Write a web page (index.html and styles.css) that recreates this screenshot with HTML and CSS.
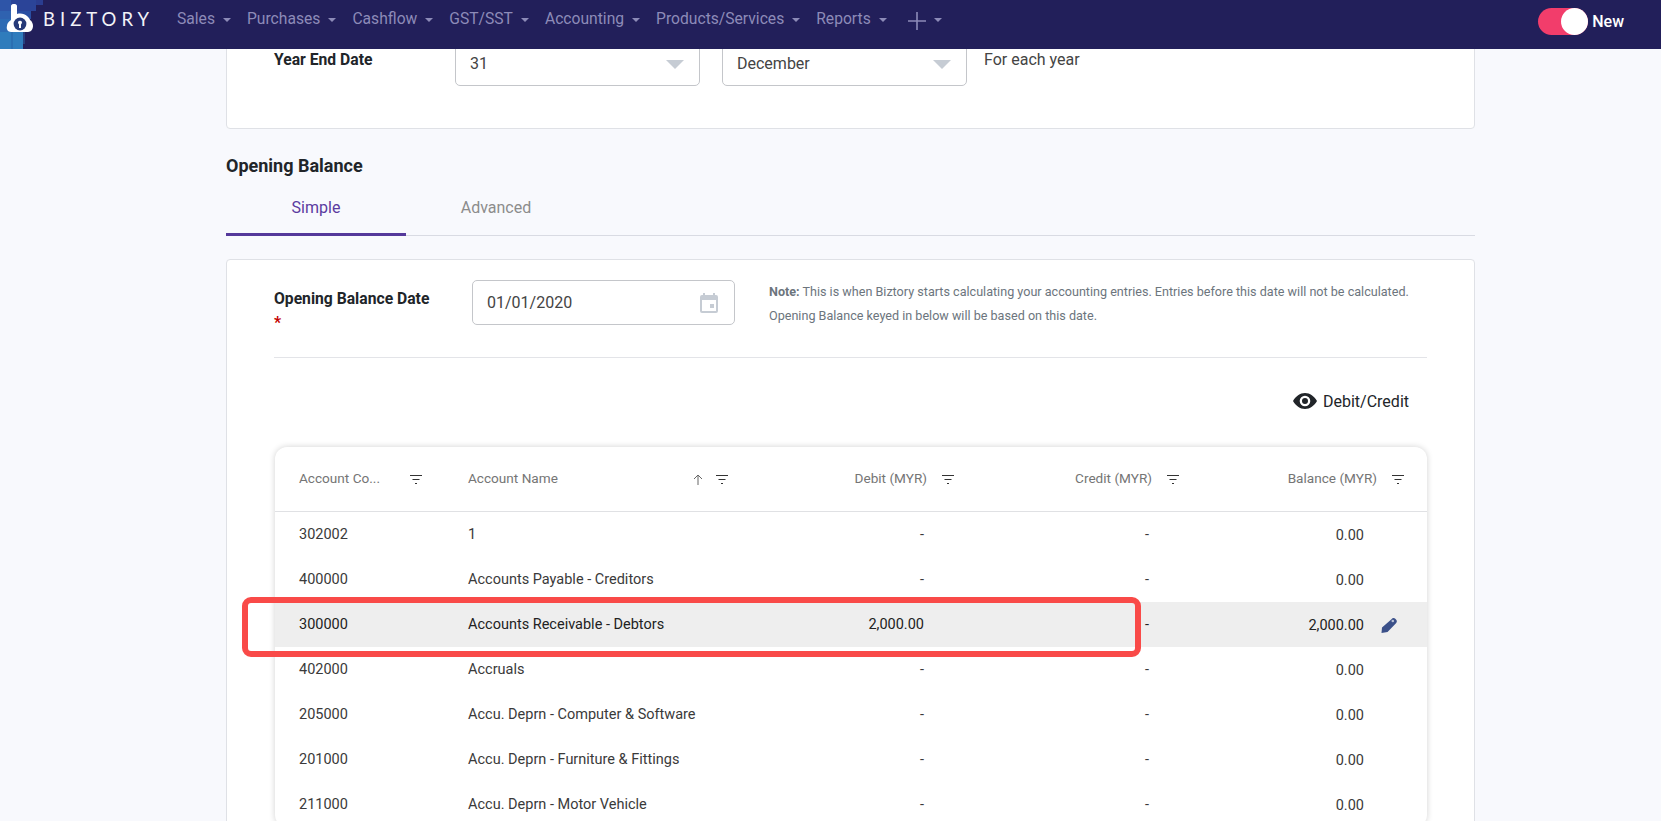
FILE: index.html
```html
<!DOCTYPE html>
<html lang="en">
<head>
<meta charset="utf-8">
<title>Biztory - Opening Balance</title>
<link rel="stylesheet" href="styles.css">
</head>
<body>
<header class="nav">
  <div class="brand">
    <svg class="logo" width="43" height="49" viewBox="0 0 43 49">
      <rect x="0" y="0" width="43" height="5" fill="#2a3d90"/>
      <rect x="0" y="0" width="36" height="11" fill="#2b4498"/>
      <rect x="0" y="11" width="31" height="8" fill="#2a4fa2"/>
      <rect x="0" y="0" width="11" height="11" fill="#2e55a8"/>
      <rect x="0" y="11" width="11" height="10" fill="#2f62b0"/>
      <rect x="0" y="19" width="26" height="13" fill="#2d6bb4"/>
      <rect x="0" y="32" width="23" height="17" fill="#2f7cbc"/>
      <rect x="11" y="32" width="2" height="17" fill="#2b6fb2"/>
      <rect x="23" y="32" width="2" height="12" fill="#25407f"/>
      <path fill="#fff" d="M11 6c0-1 1-2 2-2h2c1 0 2 1 2 2v8c4-1 8 0 10 2 2 2 3 3 3 4 2 1 3 4 3 6 0 3-2 6-5 6H11c-3 0-5-3-4-6 0-2 1-4 4-6z"/>
      <circle cx="20" cy="24" r="6.4" fill="#263a78"/>
      <path fill="#fff" d="M18 22a2.2 2.2 0 0 1 4 0c0 1-.5 2-1 2.400V28h-2v-3.600c-.5-.4-1-1.400-1-2.400z"/>
    </svg>
    <span class="wordmark">BIZTORY</span>
  </div>
  <nav class="menu">
    <a class="menu-item">Sales<i class="caret"></i></a>
    <a class="menu-item">Purchases<i class="caret"></i></a>
    <a class="menu-item">Cashflow<i class="caret"></i></a>
    <a class="menu-item">GST/SST<i class="caret"></i></a>
    <a class="menu-item">Accounting<i class="caret"></i></a>
    <a class="menu-item">Products/Services<i class="caret"></i></a>
    <a class="menu-item">Reports<i class="caret"></i></a>
    <a class="menu-item plus-item">
      <svg class="plus" width="18" height="18" viewBox="0 0 18 18"><path d="M9 0v18M0 9h18" stroke="#8d8bb8" stroke-width="1.600"/></svg><i class="caret"></i>
    </a>
  </nav>
  <div class="switch-group">
    <span class="switch"><span class="knob"></span></span>
    <span class="switch-label">New</span>
  </div>
</header>

<main class="page">
  <section class="card year-card">
    <div class="year-row">
      <div class="field-label year-label">Year End Date</div>
      <div class="select">31<i class="select-arrow"></i></div>
      <div class="select">December<i class="select-arrow"></i></div>
      <div class="year-hint">For each year</div>
    </div>
  </section>

  <h2 class="section-title">Opening Balance</h2>
  <div class="tabs">
    <div class="tab tab-active">Simple</div>
    <div class="tab">Advanced</div>
  </div>

  <section class="card balance-card">
    <div class="date-row">
      <div class="field-label date-label">Opening Balance Date<br><span class="req">*</span></div>
      <div class="date-input">01/01/2020
        <svg width="18" height="20" viewBox="0 0 18 20"><path fill="#c6ccd4" fill-rule="evenodd" d="M3 0h2v2h8V0h2v2h1a2 2 0 0 1 2 2v14a2 2 0 0 1-2 2H2a2 2 0 0 1-2-2V4a2 2 0 0 1 2-2h1zM2 7v11h14V7zm8 4h4v4h-4z"/></svg>
      </div>
      <p class="note"><b>Note:</b> This is when Biztory starts calculating your accounting entries. Entries before this date will not be calculated.<br>Opening Balance keyed in below will be based on this date.</p>
    </div>
    <hr class="divider">
    <div class="toggle-row">
      <svg width="24" height="16" viewBox="0 0 24 16"><path fill="#212529" fill-rule="evenodd" d="M12 0C7 0 2.700 3.300 0 8c2.700 4.700 7 8 12 8s9.300-3.300 12-8c-2.700-4.700-7-8-12-8zm0 13.300A5.300 5.300 0 1 1 12 2.700a5.300 5.300 0 0 1 0 10.600zM12 5a3 3 0 1 0 0 6 3 3 0 0 0 0-6z"/></svg>
      <span>Debit/Credit</span>
    </div>

    <div class="table">
      <div class="thead">
        <div class="th th-code"><span class="th-text">Account Co...</span><svg class="filter" viewBox="0 0 12 9"><path d="M0 .5h12M2.500 4.500h7M5 8.500h2" stroke="#333" stroke-width="1"/></svg></div>
        <div class="th th-name"><span class="th-text">Account Name</span>
          <svg class="sort" viewBox="0 0 10 11"><path d="M5 11V1M1 5l4-4 4 4" fill="none" stroke="#666" stroke-width="1"/></svg>
          <svg class="filter" viewBox="0 0 12 9"><path d="M0 .5h12M2.500 4.500h7M5 8.500h2" stroke="#333" stroke-width="1"/></svg></div>
        <div class="th th-num">Debit (MYR)<svg class="filter" viewBox="0 0 12 9"><path d="M0 .5h12M2.500 4.500h7M5 8.500h2" stroke="#333" stroke-width="1"/></svg></div>
        <div class="th th-num">Credit (MYR)<svg class="filter" viewBox="0 0 12 9"><path d="M0 .5h12M2.500 4.500h7M5 8.500h2" stroke="#333" stroke-width="1"/></svg></div>
        <div class="th th-num th-bal">Balance (MYR)<svg class="filter" viewBox="0 0 12 9"><path d="M0 .5h12M2.500 4.500h7M5 8.500h2" stroke="#333" stroke-width="1"/></svg></div>
      </div>
      <div class="tr"><div class="td">302002</div><div class="td">1</div><div class="td td-num">-</div><div class="td td-num">-</div><div class="td td-bal">0.00</div></div>
      <div class="tr"><div class="td">400000</div><div class="td">Accounts Payable - Creditors</div><div class="td td-num">-</div><div class="td td-num">-</div><div class="td td-bal">0.00</div></div>
      <div class="tr tr-active"><div class="td">300000</div><div class="td">Accounts Receivable - Debtors</div><div class="td td-num">2,000.00</div><div class="td td-num">-</div><div class="td td-bal">2,000.00
        <svg class="pencil" viewBox="0 0 16 15"><path fill="#3b5089" d="M10.500 1.200c1-1.200 2.500-1.500 3.800-.4l.9.9c1 1.100.8 2.600-.2 3.600L6.500 14 .5 15l.5-5.500z"/><circle cx="11.800" cy="3" r="1.300" fill="#b9c0d6"/></svg></div></div>
      <div class="tr"><div class="td">402000</div><div class="td">Accruals</div><div class="td td-num">-</div><div class="td td-num">-</div><div class="td td-bal">0.00</div></div>
      <div class="tr"><div class="td">205000</div><div class="td">Accu. Deprn - Computer &amp; Software</div><div class="td td-num">-</div><div class="td td-num">-</div><div class="td td-bal">0.00</div></div>
      <div class="tr"><div class="td">201000</div><div class="td">Accu. Deprn - Furniture &amp; Fittings</div><div class="td td-num">-</div><div class="td td-num">-</div><div class="td td-bal">0.00</div></div>
      <div class="tr"><div class="td">211000</div><div class="td">Accu. Deprn - Motor Vehicle</div><div class="td td-num">-</div><div class="td td-num">-</div><div class="td td-bal">0.00</div></div>
    </div>
  </section>
</main>
<div class="callout"></div>
</body>
</html>
```

FILE: styles.css
```css
* { box-sizing: border-box; }
html, body { margin: 0; height: 100%; }
body {
  height: 821px;
  overflow: hidden;
  background: #f8f9fd;
  color: #212529;
  font-family: Roboto, "Liberation Sans", sans-serif;
  font-size: 14px;
  position: relative;
}

/* Top bar */
.nav {
  position: relative;
  z-index: 2;
  display: flex;
  align-items: flex-start;
  height: 49px;
  background: #221f5a;
}
.brand { display: flex; align-items: flex-start; width: 177px; height: 49px; }
.logo { display: block; flex: none; }
.wordmark {
  margin-top: 8px;
  color: #f2f2f7;
  font-family: Lato, sans-serif;
  font-size: 18.500px;
  line-height: 22px;
  letter-spacing: 5px;
}
.menu { display: flex; align-items: center; height: 38px; gap: 16px; }
.menu-item {
  display: flex;
  align-items: center;
  color: #8d8bb8;
  font-size: 15.650px;
  line-height: 20px;
}
.plus-item { margin-left: 5px; }
.plus { margin-top: 4px; }
.caret {
  display: block;
  margin-left: 8px;
  margin-top: 2px;
  border-left: 4px solid transparent;
  border-right: 4px solid transparent;
  border-top: 4px solid #8d8bb8;
}
.switch-group {
  display: flex;
  align-items: center;
  gap: 4px;
  height: 43px;
  margin-left: auto;
  padding-right: 37px;
}
.switch {
  display: flex;
  justify-content: flex-end;
  width: 50px;
  height: 27px;
  border-radius: 14px;
  background: #f23d6b;
}
.knob { width: 27px; height: 27px; border-radius: 50%; background: #fff; }
.switch-label { color: #fff; font-size: 16px; font-weight: 500; }

/* Page */
.page { padding: 0 186px 0 226px; }
.card {
  background: #fff;
  border: 1px solid #dfe1e6;
  border-radius: 4px;
}
.year-card { height: 110px; margin-top: -30px; padding: 21px 47px 0; }
.year-row { display: flex; align-items: flex-start; }
.field-label { font-weight: 700; font-size: 15.700px; line-height: 24px; color: #212529; }
.year-label { width: 181px; padding-top: 7px; }
.select {
  position: relative;
  display: flex;
  align-items: center;
  width: 245px;
  height: 45px;
  margin-right: 22px;
  padding-left: 14px;
  background: #fff;
  border: 1px solid #c4c6ca;
  border-radius: 5px;
  color: #444;
  font-size: 16px;
}
.select-arrow {
  position: absolute;
  right: 15px;
  top: 18px;
  border-left: 9px solid transparent;
  border-right: 9px solid transparent;
  border-top: 9px solid #c6ccd4;
}
.year-hint { margin-left: -5px; padding-top: 7px; font-size: 16px; line-height: 24px; color: #444; }

.section-title {
  margin: 27px 0 0;
  font-size: 18px;
  font-weight: 700;
  line-height: 20px;
  color: #212529;
}
.tabs {
  display: flex;
  height: 60px;
  border-bottom: 1px solid #d9dbe3;
}
.tab {
  display: flex;
  align-items: center;
  justify-content: center;
  width: 180px;
  height: 62px;
  padding-top: 8px;
  border-bottom: 3px solid transparent;
  font-size: 16px;
  color: #8c8c8c;
  margin-top: -2px;
}
.tab-active { color: #5b3ca0; border-bottom-color: #55399b; }

.balance-card { margin-top: 23px; height: 700px; padding: 20px 47px 0; }
.date-row { display: flex; align-items: flex-start; }
.date-label { width: 198px; padding-top: 7px; flex: none; }
.req { color: #c40000; }
.date-input {
  display: flex;
  align-items: center;
  justify-content: space-between;
  flex: none;
  width: 263px;
  height: 45px;
  padding: 0 16px 0 14px;
  border: 1px solid #c4c6ca;
  border-radius: 5px;
  font-size: 16px;
  color: #444;
}
.note {
  margin: 0 0 0 34px;
  font-size: 12.600px;
  line-height: 24px;
  color: #6c757d;
  white-space: nowrap;
}
.note b { font-weight: 700; }
.divider { margin: 22px 0 0; border: 0; border-top: 1px solid #e3e4e8; }
.toggle-row {
  display: flex;
  align-items: center;
  justify-content: flex-end;
  gap: 6px;
  height: 20px;
  margin-top: 33px;
  padding-right: 18px;
  font-size: 16px;
  color: #212529;
}

/* Table */
.table {
  margin: 36px 0 0 1px;
  background: #fff;
  border-radius: 12px;
  box-shadow: 0 0 6px rgba(0, 0, 0, .18);
  overflow: hidden;
}
.thead, .tr {
  display: grid;
  grid-template-columns: 169px 301px 225px 225px 1fr;
}
.thead { height: 65px; border-bottom: 1px solid #e0e1e4; }
.th {
  display: flex;
  align-items: center;
  justify-content: flex-end;
  gap: 15px;
  height: 62px;
  color: #757575;
  font-size: 13.600px;
}
.th-code { padding: 0 22px 0 24px; }
.th-name { padding: 0 17px 0 24px; gap: 13px; }
.th-text { flex: 1; }
.th-num { padding-right: 16px; }
.th-bal { padding-right: 23px; }
.filter { width: 12px; height: 9px; flex: none; margin-top: 3px; }
.sort { width: 10px; height: 11px; flex: none; margin-top: 2px; }
.tr { height: 45px; }
.tr-active { background: #eee; }
.td { display: flex; align-items: center; padding-left: 24px; color: #3a3a3a; font-size: 14.500px; }
.tr-active .td { color: #222; }
.td-num { justify-content: flex-end; padding: 0 46px 0 0; }
.td-bal { position: relative; justify-content: flex-end; padding: 2px 63px 0 0; }
.pencil { position: absolute; right: 30px; top: 16px; width: 16px; height: 15px; }

/* Red annotation drawn over the screenshot */
.callout {
  position: absolute;
  z-index: 3;
  left: 242px;
  top: 597px;
  width: 899px;
  height: 60px;
  border: 6px solid #f94a48;
  border-radius: 9px;
}
```
